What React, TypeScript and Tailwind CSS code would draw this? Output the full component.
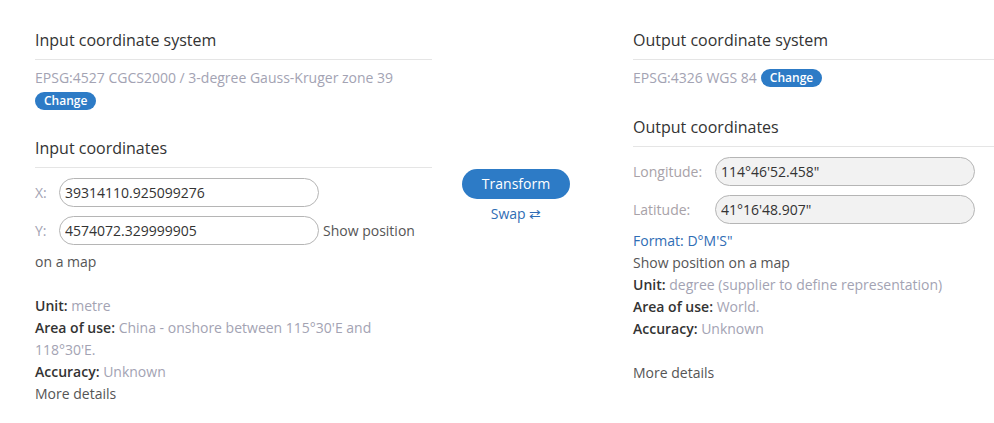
import React from "react";

const Badge = () => (
  <span className="inline-flex h-[18px] items-center rounded-full bg-[#2d7bc6] px-[9px] text-[12px] leading-none font-semibold text-white align-middle">
    Change
  </span>
);

const Heading = ({ children }: { children: React.ReactNode }) => (
  <div className="border-b border-[#e5e5e5] pb-[7px] text-[16px] leading-[24px] text-[#333]">
    {children}
  </div>
);

const Info = ({ label, value }: { label: string; value: string }) => (
  <div>
    <span className="font-semibold text-[#333]">{label}</span>{" "}
    <span className="text-[#a3a3b3]">{value}</span>
  </div>
);

export default function App() {
  return (
    <div
      className="flex min-h-[423px] w-[994px] bg-white text-[14px] leading-[22px] text-[#555]"
      style={{ fontFamily: '"Open Sans", sans-serif' }}
    >
      {/* Left column */}
      <div className="ml-[35px] w-[397px] pt-[28px]">
        <Heading>Input coordinate system</Heading>
        <div className="mt-[7px] text-[#a3a3b3]">
          EPSG:4527 CGCS2000 / 3-degree Gauss-Kruger zone 39
        </div>
        <div className="mt-[1px] flex h-[22px] items-center">
          <Badge />
        </div>
        <div className="mt-[24px]">
          <Heading>Input coordinates</Heading>
        </div>
        <div className="mt-[10px] flex items-center">
          <span className="w-[24px] text-[#a3a3b3]">X:</span>
          <input
            readOnly
            value="39314110.925099276"
            className="h-[29px] w-[260px] rounded-full border border-[#b5b5b5] bg-white px-[5px] text-[14px] text-[#333] outline-none"
            style={{ fontFamily: '"Open Sans", sans-serif' }}
          />
        </div>
        <div className="mt-[9px] flex items-center">
          <span className="w-[24px] text-[#a3a3b3]">Y:</span>
          <input
            readOnly
            value="4574072.329999905"
            className="h-[29px] w-[260px] rounded-full border border-[#b5b5b5] bg-white px-[5px] text-[14px] text-[#333] outline-none"
            style={{ fontFamily: '"Open Sans", sans-serif' }}
          />
          <span className="ml-[4px]">Show position</span>
        </div>
        <div className="mt-[6px]">on a map</div>
        <div className="mt-[22px]">
          <Info label="Unit:" value="metre" />
          <Info label="Area of use:" value="China - onshore between 115°30'E and 118°30'E." />
          <Info label="Accuracy:" value="Unknown" />
          <div>More details</div>
        </div>
      </div>

      {/* Center column */}
      <div className="flex w-[168px] flex-col items-center pt-[169px]">
        <button className="h-[30px] w-[108px] rounded-full bg-[#2d7bc6] text-[14px] text-white">
          Transform
        </button>
        <div className="mt-[4px] text-[#2f6db5]">Swap ⇄</div>
      </div>

      {/* Right column */}
      <div className="ml-[33px] flex-1 pt-[28px]">
        <Heading>Output coordinate system</Heading>
        <div className="mt-[7px] flex items-center text-[#a3a3b3]">
          <span>EPSG:4326 WGS 84</span>
          <span className="ml-[4px] flex">
            <Badge />
          </span>
        </div>
        <div className="mt-[26px]">
          <Heading>Output coordinates</Heading>
        </div>
        <div className="mt-[10px] flex items-center">
          <span className="w-[82px] text-[#a8a2a8]">Longitude:</span>
          <input
            readOnly
            value={`114°46'52.458"`}
            className="h-[29px] w-[260px] rounded-full border border-[#b5b5b5] bg-[#f2f2f2] px-[5px] text-[14px] text-[#333] outline-none"
            style={{ fontFamily: '"Open Sans", sans-serif' }}
          />
        </div>
        <div className="mt-[9px] flex items-center">
          <span className="w-[82px] text-[#a8a2a8]">Latitude:</span>
          <input
            readOnly
            value={`41°16'48.907"`}
            className="h-[29px] w-[260px] rounded-full border border-[#b5b5b5] bg-[#f2f2f2] px-[5px] text-[14px] text-[#333] outline-none"
            style={{ fontFamily: '"Open Sans", sans-serif' }}
          />
        </div>
        <div className="mt-[6px] text-[#2f6db5]">Format: D°M'S"</div>
        <div>Show position on a map</div>
        <Info label="Unit:" value="degree (supplier to define representation)" />
        <Info label="Area of use:" value="World." />
        <Info label="Accuracy:" value="Unknown" />
        <div className="mt-[22px]">More details</div>
      </div>
    </div>
  );
}
